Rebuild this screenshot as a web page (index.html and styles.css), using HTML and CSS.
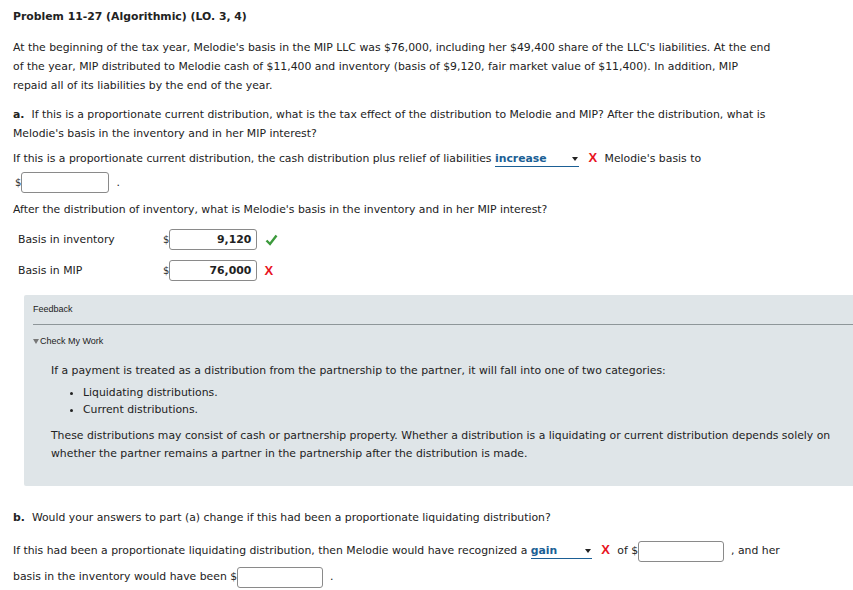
FILE: index.html
```html
<!DOCTYPE html>
<html>
<head>
<meta charset="utf-8">
<link rel="stylesheet" href="styles.css">
</head>
<body>
<div class="page">
  <h1 class="title">Problem 11-27 (Algorithmic) (LO. 3, 4)</h1>
  <p class="para intro">At the beginning of the tax year, Melodie's basis in the MIP LLC was $76,000, including her $49,400 share of the LLC's liabilities. At the end of the year, MIP distributed to Melodie cash of $11,400 and inventory (basis of $9,120, fair market value of $11,400). In addition, MIP repaid all of its liabilities by the end of the year.</p>

  <p class="para q"><b class="lead">a.</b>If this is a proportionate current distribution, what is the tax effect of the distribution to Melodie and MIP? After the distribution, what is Melodie's basis in the inventory and in her MIP interest?</p>

  <p class="para line1">If this is a proportionate current distribution, the cash distribution plus relief of liabilities <span class="sel sel-inc">increase<span class="caret"></span></span> <span class="wrong">X</span> Melodie's basis to</p>
  <div class="dollar-row"><span class="cur">$</span><span class="inp"></span><span class="dot">.</span></div>

  <p class="para after">After the distribution of inventory, what is Melodie's basis in the inventory and in her MIP interest?</p>

  <div class="grid">
    <div class="lbl">Basis in inventory</div>
    <div class="cell"><span class="cur">$</span><span class="inp val">9,120</span><svg class="check" width="13" height="12" viewBox="0 0 13 12"><path d="M1.5 6.5 L5 10 L11.5 1.5" fill="none" stroke="#3c9a3c" stroke-width="2.4"/></svg></div>
    <div class="lbl">Basis in MIP</div>
    <div class="cell"><span class="cur">$</span><span class="inp val">76,000</span><span class="wrong">X</span></div>
  </div>

  <div class="feedback">
    <div class="fb-head">Feedback</div>
    <div class="fb-rule"></div>
    <div class="fb-check"><span class="tri"></span>Check My Work</div>
    <div class="fb-body">
      <p class="fb-p">If a payment is treated as a distribution from the partnership to the partner, it will fall into one of two categories:</p>
      <ul class="fb-list">
        <li>Liquidating distributions.</li>
        <li>Current distributions.</li>
      </ul>
      <p class="fb-p fb-p2">These distributions may consist of cash or partnership property. Whether a distribution is a liquidating or current distribution depends solely on whether the partner remains a partner in the partnership after the distribution is made.</p>
    </div>
  </div>

  <p class="para qb"><b class="lead">b.</b>Would your answers to part (a) change if this had been a proportionate liquidating distribution?</p>

  <p class="para last">If this had been a proportionate liquidating distribution, then Melodie would have recognized a <span class="sel sel-gain">gain<span class="caret"></span></span> <span class="wrong">X</span>&nbsp;of $<span class="inp inline"></span>&nbsp; , and her<br>basis in the inventory would have been $<span class="inp inline"></span>&nbsp; .</p>
</div>
</body>
</html>
```

FILE: styles.css
```css
html, body { margin: 0; padding: 0; background: #fff; }
body { overflow: hidden; }
.page {
  font-family: "DejaVu Sans", Verdana, sans-serif;
  font-size: 10.85px;
  color: #222;
  padding: 8px 0 0 13px;
}
.title {
  font-size: 10.85px;
  font-weight: bold;
  margin: 0;
  line-height: 18px;
}
.para { margin: 0; line-height: 19px; max-width: 770px; }
.lead { margin-right: 7px; }
.intro { margin-top: 12px; max-width: 760px; }
.q { margin-top: 10px; }
.line1 { margin-top: 5px; }
.sel {
  display: inline-block;
  position: relative;
  font-weight: bold;
  color: #1b5f95;
  line-height: 15px;
  border-bottom: 1px solid #1b5f95;
  vertical-align: baseline;
}
.sel-inc { width: 84px; }
.sel-gain { width: 61px; }
.caret {
  position: absolute;
  right: 1px;
  top: 6px;
  width: 0; height: 0;
  border-left: 3px solid transparent;
  border-right: 3px solid transparent;
  border-top: 4px solid #222;
}
.wrong {
  color: #e8141e;
  font-family: "Liberation Sans", Arial, sans-serif;
  font-weight: bold;
  margin: 0 4px 0 6px;
  font-size: 13px;
}
.dollar-row { display: flex; align-items: center; margin-top: 3px; margin-left: 2px; height: 22px; }
.cur { font-size: 10px; color: #333; }
.inp {
  display: inline-block;
  box-sizing: border-box;
  width: 88px;
  height: 21px;
  border: 1px solid #8a8a8a;
  border-radius: 3px;
  background: #fff;
  vertical-align: middle;
}
.dot { margin-left: 7px; }
.after { margin-top: 7px; }
.grid {
  display: grid;
  grid-template-columns: 145px auto;
  row-gap: 10px;
  margin-top: 10px;
  margin-left: 5px;
  align-items: center;
}
.cell { display: flex; align-items: center; }
.val {
  font-weight: bold;
  text-align: right;
  padding: 0 5px;
  line-height: 19px;
}
.check { margin-left: 8px; }
.cell .wrong { margin-left: 7px; }
.feedback {
  margin: 14px 0 0 11px;
  background: #dfe5e8;
  border-radius: 2px 0 0 2px;
  height: 191px;
  font-family: "Liberation Sans", Arial, sans-serif;
}
.fb-head {
  font-size: 9px;
  padding: 9px 0 0 9px;
  line-height: 11px;
  color: #222;
}
.fb-rule {
  margin: 9px 0 0 9px;
  border-top: 1px solid #8e9699;
}
.fb-check {
  font-size: 9px;
  padding: 11px 0 0 9px;
  line-height: 11px;
  color: #222;
  display: flex;
  align-items: center;
}
.tri {
  width: 0; height: 0;
  border-left: 3px solid transparent;
  border-right: 3px solid transparent;
  border-top: 5px solid #777;
  margin-right: 1px;
}
.fb-body {
  font-family: "DejaVu Sans", Verdana, sans-serif;
  font-size: 10.85px;
  padding: 15px 10px 0 27px;
  color: #222;
}
.fb-p { margin: 0; line-height: 18px; }
.fb-list { margin: 4px 0 0; padding-left: 32px; line-height: 17px; }
.fb-p2 { margin-top: 9px; }
.qb { margin-top: 22px; }
.last { margin-top: 10px; line-height: 26px; max-width: 800px; }
.inp.inline { width: 86px; height: 21px; }
```
